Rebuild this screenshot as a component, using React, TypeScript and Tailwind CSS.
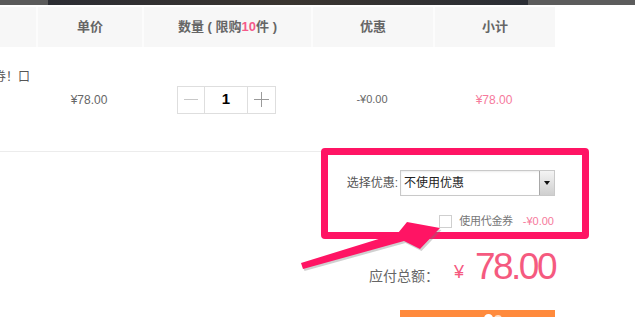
const FONT = { fontFamily: '"Liberation Sans", "Noto Sans CJK SC", sans-serif' };

const COLUMNS = [
  { key: 'name', label: '', width: 'w-[36px]' },
  { key: 'price', label: '单价', width: 'w-[106px]' },
  { key: 'qty', label: 'qty', width: 'w-[169px]' },
  { key: 'discount', label: '优惠', width: 'w-[122px]' },
  { key: 'subtotal', label: '小计', width: 'w-[122px]' },
];

function QtyStepper() {
  return (
    <div className="flex h-[28px] border border-[#dedede] bg-white">
      <button className="flex w-[26px] items-center justify-center">
        <span className="block h-[1.5px] w-[14px] bg-[#c8c8c8]" />
      </button>
      <div className="flex w-[44px] items-center justify-center border-x border-[#dedede] text-[15px] font-bold text-black">
        1
      </div>
      <button className="relative flex w-[27px] items-center justify-center">
        <span className="absolute block h-[1.5px] w-[15px] bg-[#9a9a9a]" />
        <span className="absolute block h-[15px] w-[1.5px] bg-[#9a9a9a]" />
      </button>
    </div>
  );
}

export default function App() {
  return (
    <div className="relative h-[317px] w-[635px] overflow-hidden bg-white text-[#666]" style={FONT}>
      {/* banner strip */}
      <div className="flex h-[5px]">
        <div className="w-[48px] bg-[#5a5a5a]" />
        <div className="flex-1 bg-gradient-to-r from-[#2c2d33] via-[#3a3530] to-[#2b2e35]" />
        <div className="w-[107px] bg-[#5c5c5c]" />
      </div>

      <div className="w-[555px]">
        {/* header */}
        <div className="mt-[2px] flex h-[40px] bg-[#f7f7f7] text-[13px] font-bold text-[#666]">
          {COLUMNS.map((col, i) => (
            <div
              key={col.key}
              className={`${col.width} flex items-center justify-center ${i > 0 ? 'border-l-2 border-[#fcfcfc]' : ''}`}
            >
              {col.key === 'qty' ? (
                <span>
                  数量 ( 限购<span className="text-[#f55a8a]">10</span>件 )
                </span>
              ) : (
                col.label
              )}
            </div>
          ))}
        </div>

        {/* item row */}
        <div className="flex h-[105px] border-b border-[#ececec] text-[12px]">
          <div className="w-[36px] overflow-hidden pt-[21px] whitespace-nowrap text-[12px] text-[#555]">
            <span className="-ml-[6px]">券！口</span>
          </div>
          <div className="flex w-[106px] items-center justify-center pt-[1px]">¥78.00</div>
          <div className="flex w-[169px] items-center justify-center pt-[1px]">
            <QtyStepper />
          </div>
          <div className="flex w-[122px] items-center justify-center pt-[1px] text-[11px] text-[#666]">
            -¥0.00
          </div>
          <div className="flex w-[122px] items-center justify-center pt-[1px] text-[#f67a9c]">¥78.00</div>
        </div>

        {/* coupon select */}
        <div className="mt-[18px] flex items-center justify-end gap-[2px] text-[12px]">
          <span className="text-[#555]">选择优惠:</span>
          <div className="flex h-[26px] w-[155px] items-center border border-[#c9c9c9] bg-white shadow-[inset_0_1px_2px_rgba(0,0,0,0.08)]">
            <span className="flex-1 pl-[3px] text-[12px] text-[#222]">不使用优惠</span>
            <div className="flex h-full w-[15px] items-center justify-center border-l border-[#a8a8a8] bg-gradient-to-b from-[#f4f4f4] to-[#cfcfcf]">
              <span className="block h-0 w-0 border-x-[3.5px] border-t-[4px] border-x-transparent border-t-[#111]" />
            </div>
          </div>
        </div>

        {/* voucher */}
        <div className="mt-[17px] flex items-center justify-end text-[11px]">
          <span className="mr-[7px] block h-[13px] w-[13px] border border-[#cfcfcf] bg-white" />
          <span className="tracking-[-0.3px] text-[#777]">使用代金券</span>
          <span className="ml-[10px] mr-[1px] text-[#f67a9c]">-¥0.00</span>
        </div>

        {/* total */}
        <div className="mt-[16px] flex items-end justify-end">
          <span className="mb-[1px] text-[14px] text-[#666]">应付总额：</span>
          <span className="mb-[2px] ml-[15px] text-[18px] text-[#f55a7f]">¥</span>
          <span className="ml-[11px] text-[37px] leading-[42px] tracking-[-2.5px] text-[#f55a7f]">78.00</span>
        </div>

        {/* submit */}
        <div className="mt-[22px] flex justify-end">
          <div className="relative h-[20px] w-[155px] bg-[#ff8a3c]">
            <span className="absolute left-[84px] top-[4px] h-[9px] w-[9px] rounded-full bg-white" />
            <span className="absolute left-[94px] top-[5px] h-[8px] w-[8px] rounded-full bg-[#ffe0c8]" />
          </div>
        </div>
      </div>

      {/* annotation: highlight box */}
      <div className="pointer-events-none absolute left-[321px] top-[148px] h-[91px] w-[268px] rounded-[4px] border-[7px] border-[#ff1464]" />

      {/* annotation: arrow */}
      <svg className="pointer-events-none absolute left-0 top-0" width="635" height="317" viewBox="0 0 635 317">
        <polygon
          points="301,263 303,269 404,241 420,249 440,228 407,222 398,233"
          fill="#777"
          opacity="0.35"
          transform="translate(1.5,2)"
        />
        <polygon points="301,263 303,269 404,241 420,249 440,228 407,222 398,233" fill="#ff1464" />
      </svg>
    </div>
  );
}
